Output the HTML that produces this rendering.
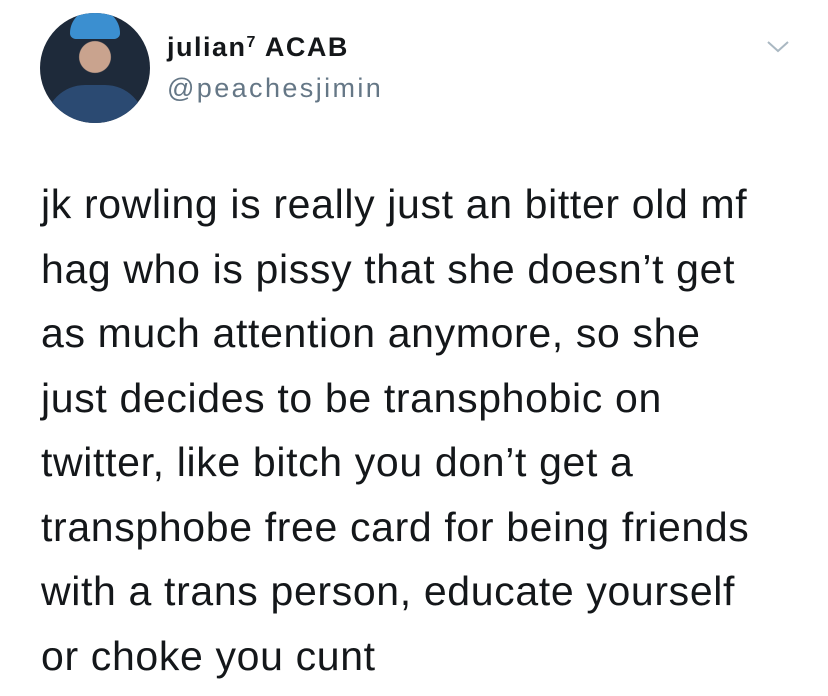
<!DOCTYPE html>
<html><head><style>
body{margin:0;width:828px;height:696px;background:#fff;position:relative;overflow:hidden;font-family:"Liberation Sans",Arial,sans-serif;}
.av{position:absolute;left:40px;top:13px;width:110px;height:110px;border-radius:50%;background:radial-gradient(circle at 50% 40%,#c9a38e 0 18%,#1e2a3a 19% 100%);overflow:hidden}
.cap{position:absolute;left:30px;top:-4px;width:50px;height:30px;background:#3b8fd0;border-radius:25px 25px 6px 6px}
.body2{position:absolute;left:5px;top:72px;width:100px;height:50px;background:#2b4a72;border-radius:40px 40px 0 0}
.name{position:absolute;left:167px;top:32px;font-size:27px;font-weight:bold;color:#14171a;letter-spacing:1.5px}
.handle{position:absolute;left:167px;top:73px;font-size:27px;color:#657786;letter-spacing:2.4px}
.txt{position:absolute;left:41px;top:172px;font-size:41px;line-height:64.5px;color:#14171a;white-space:pre;letter-spacing:0.65px}
</style></head><body>
<div class="av"><div class="body2"></div><div class="cap"></div></div>
<div class="name">julian<sup style="font-size:16px;vertical-align:9px">7</sup> ACAB</div>
<div class="handle">@peachesjimin</div>
<svg style="position:absolute;left:766px;top:40px" width="24" height="14"><path d="M2 2 L12 11 L22 2" fill="none" stroke="#aab8c2" stroke-width="2"/></svg>
<div class="txt">jk rowling is really just an bitter old mf
hag who is pissy that she doesn’t get
as much attention anymore, so she
just decides to be transphobic on
twitter, like bitch you don’t get a
transphobe free card for being friends
with a trans person, educate yourself
or choke you cunt</div>
</body></html>
